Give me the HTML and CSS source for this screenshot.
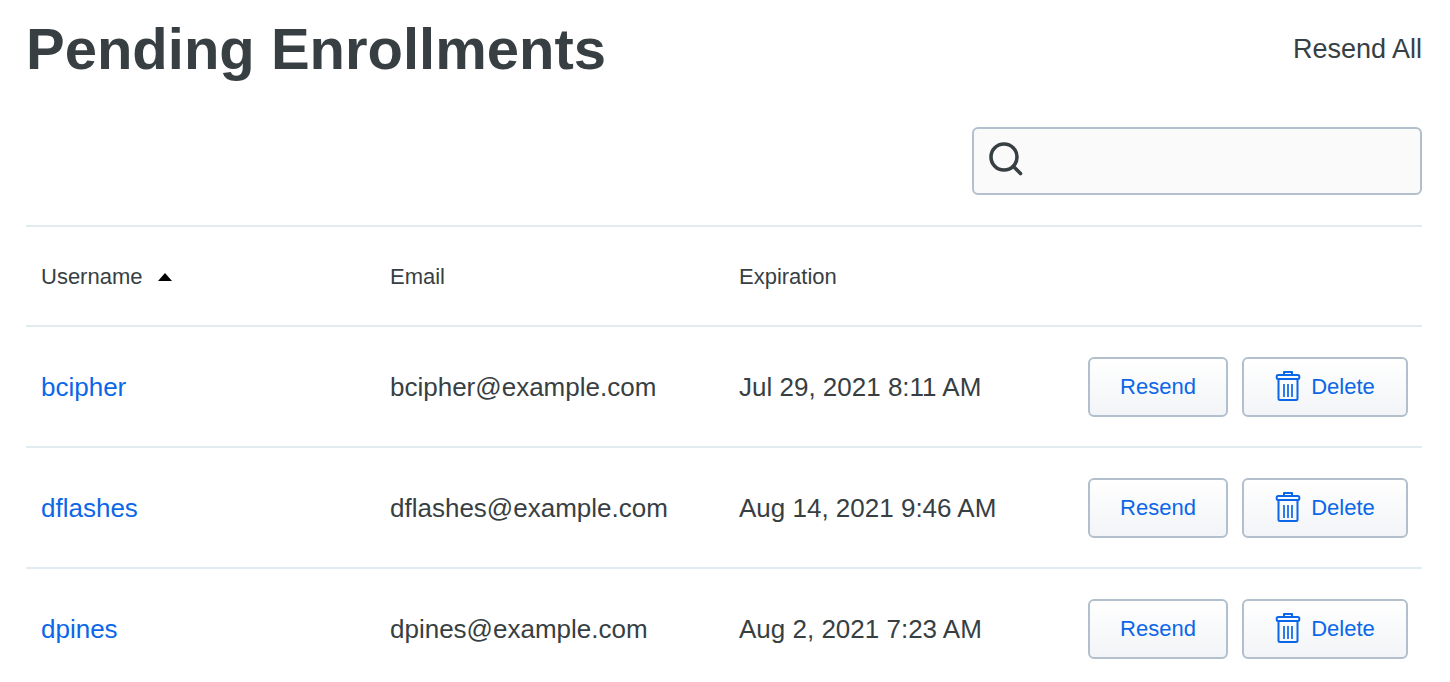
FILE: index.html
```html
<!DOCTYPE html>
<html lang="en">
<head>
    <meta charset="UTF-8">
    <meta name="viewport" content="width=device-width, initial-scale=1.0">
    <title>Pending Enrollments</title>
    <link rel="stylesheet" href="styles.css">
</head>
<body>

<svg class="sprite" aria-hidden="true">
    <symbol id="trash" viewBox="0 0 26 32">
        <g fill="none" stroke="currentColor" stroke-width="2" stroke-linejoin="round">
            <path d="M9 5V2h8v3"/>
            <rect x="1.7" y="5" width="22.6" height="4" rx="1.5"/>
            <path d="M3.5 9v19.5q0 1.5 1.5 1.5h16q1.5 0 1.5-1.5V9"/>
            <path d="M9 14v13M13 14v13M17 14v13" stroke-width="1.7"/>
        </g>
    </symbol>
</svg>

<main class="page">
    <header class="header">
        <h1 class="title">Pending Enrollments</h1>
        <a class="resend-all" href="#">Resend All</a>
    </header>

    <form class="search" role="search">
        <label class="search-label" for="search" aria-label="Search">
            <svg class="search-icon" viewBox="0 0 36 36" aria-hidden="true">
                <g fill="none" stroke="currentColor" stroke-linecap="round">
                    <circle cx="16" cy="16" r="13" stroke-width="3.6"/>
                    <path d="M25.5 25.5l7 7" stroke-width="3.6"/>
                </g>
            </svg>
        </label>
        <input class="search-input" type="search" id="search">
    </form>

    <table class="enrollments">
        <thead>
            <tr>
                <th aria-sort="ascending">Username <span class="sort-arrow"></span></th>
                <th>Email</th>
                <th>Expiration</th>
                <td></td>
            </tr>
        </thead>
        <tbody>
            <tr>
                <td><a class="user" href="#">bcipher</a></td>
                <td>bcipher@example.com</td>
                <td>Jul 29, 2021 8:11 AM</td>
                <td>
                    <div class="actions">
                        <button class="btn btn-resend" type="button">Resend</button>
                        <button class="btn btn-delete" type="button"><svg class="trash-icon" aria-hidden="true"><use href="#trash"/></svg>Delete</button>
                    </div>
                </td>
            </tr>
            <tr>
                <td><a class="user" href="#">dflashes</a></td>
                <td>dflashes@example.com</td>
                <td>Aug 14, 2021 9:46 AM</td>
                <td>
                    <div class="actions">
                        <button class="btn btn-resend" type="button">Resend</button>
                        <button class="btn btn-delete" type="button"><svg class="trash-icon" aria-hidden="true"><use href="#trash"/></svg>Delete</button>
                    </div>
                </td>
            </tr>
            <tr>
                <td><a class="user" href="#">dpines</a></td>
                <td>dpines@example.com</td>
                <td>Aug 2, 2021 7:23 AM</td>
                <td>
                    <div class="actions">
                        <button class="btn btn-resend" type="button">Resend</button>
                        <button class="btn btn-delete" type="button"><svg class="trash-icon" aria-hidden="true"><use href="#trash"/></svg>Delete</button>
                    </div>
                </td>
            </tr>
        </tbody>
    </table>
</main>

</body>
</html>
```
FILE: styles.css
```css
* {
    box-sizing: border-box;
}

body {
    margin: 0;
    background: #fff;
    color: #373f43;
    font-family: "Liberation Sans", Arial, sans-serif;
    font-size: 26px;
}

.sprite {
    display: none;
}

.page {
    padding: 16px 28px 0 26px;
}

.header {
    display: flex;
    justify-content: space-between;
    align-items: center;
}

.title {
    margin: 0;
    font-size: 58px;
    line-height: 66px;
}

.resend-all {
    color: inherit;
    font-size: 27px;
    text-decoration: none;
}

.search {
    display: flex;
    align-items: center;
    width: 450px;
    max-width: 100%;
    height: 68px;
    margin: 45px 0 30px auto;
    padding: 0 14px;
    background: #fafafa;
    border: 2px solid #b2c0cd;
    border-radius: 6px;
}

.search-label {
    display: flex;
    padding-bottom: 4px;
}

.search-icon {
    width: 36px;
    height: 36px;
}

.search-input {
    flex: 1;
    min-width: 0;
    height: 100%;
    padding: 0 12px;
    border: none;
    outline: none;
    background: transparent;
    color: inherit;
    font: inherit;
}

.enrollments {
    width: 100%;
    table-layout: fixed;
    border-collapse: separate;
    border-spacing: 0;
    border-top: 2px solid #e1ebf0;
}

.enrollments th,
.enrollments td {
    padding: 30px 14px 29px 15px;
    text-align: left;
    vertical-align: middle;
    border-bottom: 2px solid #e1ebf0;
}

.enrollments th {
    height: 100px;
    font-size: 22px;
    font-weight: normal;
}

.enrollments tbody tr:last-child td {
    padding-bottom: 23px;
    border-bottom: none;
}

.sort-arrow {
    display: inline-block;
    margin-left: 9px;
    vertical-align: 3px;
    border-left: 7px solid transparent;
    border-right: 7px solid transparent;
    border-bottom: 8px solid #000;
}

.user {
    color: #0b67e8;
    text-decoration: none;
}

.actions {
    display: flex;
    justify-content: flex-end;
    gap: 14px;
}

.btn {
    display: flex;
    align-items: center;
    justify-content: center;
    gap: 10px;
    height: 60px;
    padding: 0;
    background: linear-gradient(#fff, #f2f4f7);
    border: 2px solid #b2c0cd;
    border-radius: 6px;
    color: #0b67e8;
    font-family: inherit;
    font-size: 22px;
    cursor: pointer;
}

.btn-resend {
    width: 140px;
}

.btn-delete {
    width: 166px;
}

.trash-icon {
    width: 26px;
    height: 32px;
    margin-bottom: 2px;
}
```
